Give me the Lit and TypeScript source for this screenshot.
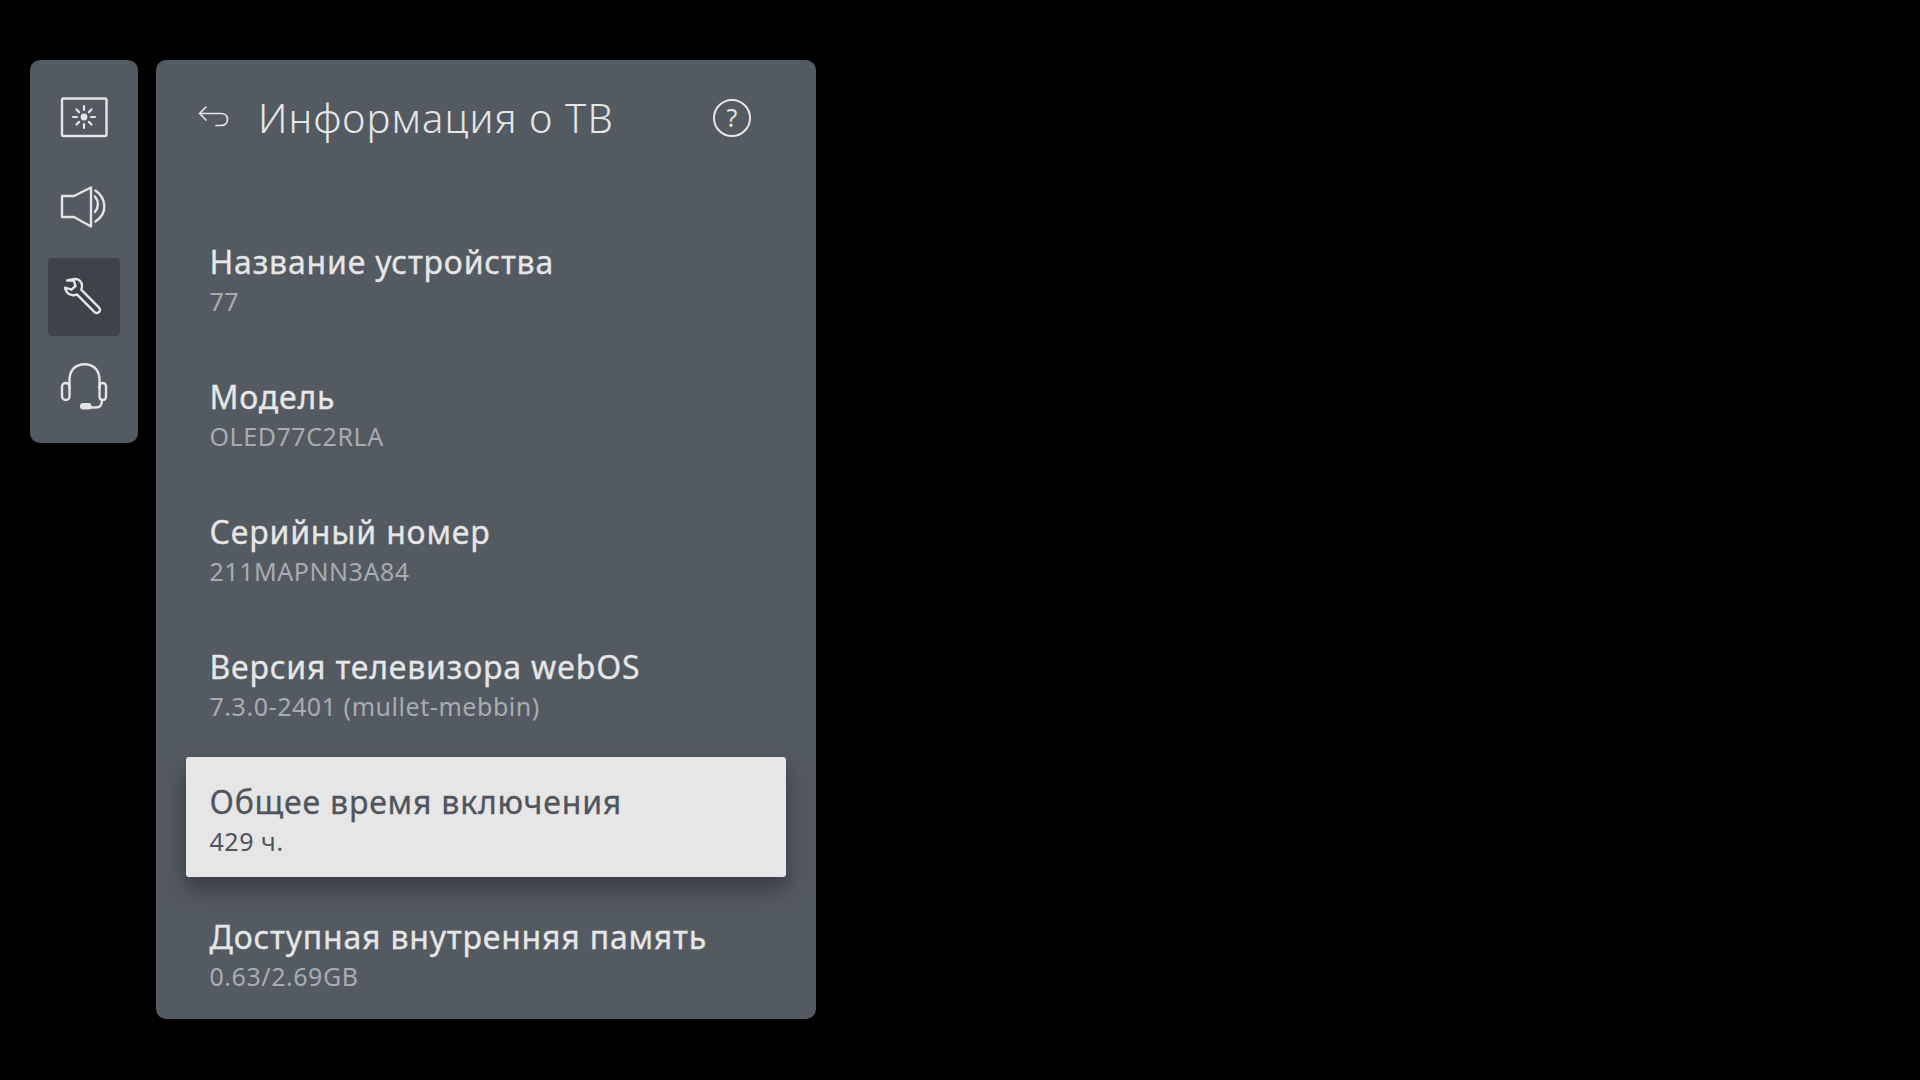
import { LitElement, html, css, svg } from "lit";
import { customElement } from "lit/decorators.js";

const rows: [string, string][] = [
  ["Название устройства", "77"],
  ["Модель", "OLED77C2RLA"],
  ["Серийный номер", "211MAPNN3A84"],
  ["Версия телевизора webOS", "7.3.0-2401 (mullet-mebbin)"],
  ["Общее время включения", "429 ч."],
  ["Доступная внутренняя память", "0.63/2.69GB"],
];

const brightness = svg`<rect x="7" y="10.500" width="44.500" height="37.500" rx="1.500"/>
  <circle cx="29" cy="29" r="3.400" fill="currentColor" stroke="none"/>
  <path d="M29 18v4M29 36v4M18 29h4M36 29h4M21.500 21.500l2.600 2.600M33.900 33.900l2.600 2.600M36.500 21.500l-2.600 2.600M24.100 33.900l-2.600 2.600" stroke-width="2.200"/>`;
const speaker = svg`<path d="M7 18h12L36 9.500v39L19 39H7z"/>
  <path d="M40 18.500c3.800 4.500 3.800 11 0 15.500M40.500 12.500c11 8 12.500 23 0 31"/>`;
const wrench = svg`<path d="M12 12.500l7.500-1.500c4-.5 7.500 2.500 7.500 7 0 1.500-.3 2.700-.8 3.700l17.600 17.600c1.800 1.800 1.500 3.500.2 4.700-1.300 1.300-3 1.500-4.700-.2L21.900 26.400c-1.500.7-3 1-4.600.7-3.800-.6-6.600-3.600-7.300-7.500l6.500 2.100 4-3.700-1.700-5.700z"/>`;
const headset = svg`<path d="M14.500 30V22C14.500 12 20.500 6.200 29.500 6.200S44.500 12 44.500 22v8"/>
  <rect x="7" y="25" width="7.500" height="17" rx="3.700"/>
  <rect x="44.500" y="25" width="6.500" height="17" rx="3.200"/>
  <path d="M47 42c0 5.500-2 7.500-6.500 7.500h-5"/>
  <rect x="25" y="45" width="11.500" height="6.500" rx="3.200" fill="currentColor" stroke="none"/>`;

@customElement("app-root")
export class AppRoot extends LitElement {
  static styles = css`
    :host {
      display: block;
      box-sizing: border-box;
      width: 1920px;
      height: 1080px;
      background: #000;
      font-family: "Noto Sans", "Liberation Sans", sans-serif;
      overflow: hidden;
    }
    .screen {
      display: flex;
      align-items: flex-start;
      gap: 18px;
      padding: 60px 0 0 30px;
    }
    .rail {
      box-sizing: border-box;
      width: 108px;
      height: 383px;
      border-radius: 10px;
      background: #545a62;
      padding: 18px;
      display: flex;
      flex-direction: column;
      gap: 12px;
    }
    .rail-item {
      width: 72px;
      height: 78px;
      flex: none;
      border-radius: 4px;
      display: flex;
      align-items: center;
      justify-content: center;
      color: #e4e4e4;
    }
    .rail-item.active {
      background: #3e4249;
    }
    .rail-item svg {
      width: 58px;
      height: 58px;
      fill: none;
      stroke: currentColor;
      stroke-width: 2.400;
      stroke-linejoin: round;
      stroke-linecap: round;
    }
    .panel {
      box-sizing: border-box;
      width: 660px;
      height: 959px;
      border-radius: 10px;
      background: #545a62;
      padding: 0 30px;
      display: flex;
      flex-direction: column;
    }
    .head {
      height: 116px;
      display: flex;
      align-items: center;
      color: #e6e6e6;
      flex: none;
    }
    .back {
      width: 34px;
      height: 30px;
      margin-left: 11px;
      margin-right: 27px;
      fill: none;
      stroke: currentColor;
      stroke-width: 1.700;
      stroke-linecap: round;
      stroke-linejoin: round;
      flex: none;
    }
    .title {
      font-size: 40px;
      font-weight: 300;
      line-height: 56px;
      letter-spacing: 1.150px;
      flex: 1;
      white-space: nowrap;
    }
    .help {
      width: 38px;
      height: 38px;
      margin-right: 35px;
      margin-top: -1px;
      box-sizing: border-box;
      border: 2px solid #e6e6e6;
      border-radius: 50%;
      font-size: 25px;
      line-height: 33px;
      font-weight: 400;
      text-align: center;
      flex: none;
    }
    .list {
      margin-top: 41px;
      display: flex;
      flex-direction: column;
      gap: 15px;
    }
    .row {
      box-sizing: border-box;
      height: 120px;
      padding: 20px 24px 0 23.500px;
      border-radius: 3px;
      color: #e6e6e6;
    }
    .row.focus {
      background: #e6e6e6;
      color: #50555d;
      box-shadow: 0 12px 22px rgba(30, 32, 38, 0.55);
    }
    .name {
      font-size: 32px;
      line-height: 49px;
      letter-spacing: 0.800px;
      white-space: nowrap;
      -webkit-text-stroke: 0.300px currentColor;
    }
    .val {
      font-size: 25px;
      line-height: 30px;
      letter-spacing: 0.550px;
      color: #a8acb1;
      white-space: nowrap;
    }
    .focus .val {
      color: #50555d;
    }
  `;

  render() {
    const icons = [brightness, speaker, wrench, headset];
    return html`<div class="screen">
      <div class="rail">
        ${icons.map(
          (ic, i) => html`<div class="rail-item ${i === 2 ? "active" : ""}">
            <svg viewBox="0 0 58 58">${ic}</svg>
          </div>`
        )}
      </div>
      <div class="panel">
        <div class="head">
          <svg class="back" viewBox="0 0 34 30">
            <path d="M9 4L2.500 10.500 9 17M3 10.500h21c4 0 6.500 2.500 6.500 6s-2.500 6-6.500 6h-5" />
          </svg>
          <div class="title">Информация о ТВ</div>
          <div class="help">?</div>
        </div>
        <div class="list">
          ${rows.map(
            ([n, v], i) => html`<div class="row ${i === 4 ? "focus" : ""}">
              <div class="name">${n}</div>
              <div class="val">${v}</div>
            </div>`
          )}
        </div>
      </div>
    </div>`;
  }
}
